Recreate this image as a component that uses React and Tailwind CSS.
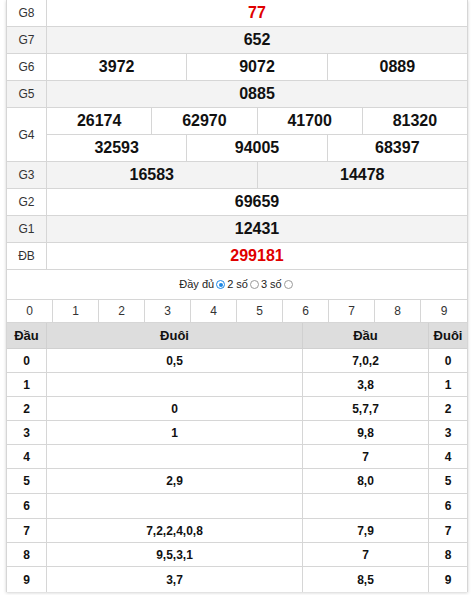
import React from "react";

const prizes = [
  { label: "G8", rows: [["77"]], red: true },
  { label: "G7", rows: [["652"]], gray: true },
  { label: "G6", rows: [["3972", "9072", "0889"]] },
  { label: "G5", rows: [["0885"]], gray: true },
  { label: "G4", rows: [["26174", "62970", "41700", "81320"], ["32593", "94005", "68397"]] },
  { label: "G3", rows: [["16583", "14478"]], gray: true },
  { label: "G2", rows: [["69659"]] },
  { label: "G1", rows: [["12431"]], gray: true },
  { label: "ĐB", rows: [["299181"]], red: true },
];

const loto = [
  { d: "0", tail: "0,5", head: "7,0,2" },
  { d: "1", tail: "", head: "3,8" },
  { d: "2", tail: "0", head: "5,7,7" },
  { d: "3", tail: "1", head: "9,8" },
  { d: "4", tail: "", head: "7" },
  { d: "5", tail: "2,9", head: "8,0" },
  { d: "6", tail: "", head: "" },
  { d: "7", tail: "7,2,2,4,0,8", head: "7,9" },
  { d: "8", tail: "9,5,3,1", head: "7" },
  { d: "9", tail: "3,7", head: "8,5" },
];

const rowH = ["h-[24px]", "h-[24px]", "h-[24px]", "h-[24px]", "h-[24px]", "h-[25px]", "h-[25px]", "h-[24px]", "h-[24px]", "h-[25px]"];

function Radio({ checked }) {
  return checked ? (
    <span className="inline-block w-[9px] h-[9px] rounded-full border border-[#1e88e5] bg-white p-[1.5px] mx-[2px]">
      <span className="block w-full h-full rounded-full bg-[#1e88e5]" />
    </span>
  ) : (
    <span className="inline-block w-[9px] h-[9px] rounded-full border border-[#9a9a9a] bg-white mx-[2px]" />
  );
}

export default function App() {
  return (
    <div className="bg-white min-h-screen font-['Liberation_Sans',Arial,sans-serif] text-[#111]">
      <div className="mx-[6px] border-x border-[#d6d6d6] shadow-[0_1px_3px_rgba(0,0,0,0.18)]">
        {/* prize table */}
        {prizes.map((p) => (
          <div key={p.label} className={`flex border-b border-[#d6d6d6] ${p.gray ? "bg-[#f3f3f3]" : "bg-white"}`}>
            <div className="w-[40px] shrink-0 border-r border-[#d6d6d6] flex items-center justify-center text-[12px] text-[#333]">
              {p.label}
            </div>
            <div className="flex-1 flex flex-col">
              {p.rows.map((r, i) => (
                <div key={i} className={`flex ${i < p.rows.length - 1 ? "border-b border-[#d6d6d6] h-[27px]" : "h-[26px]"}`}>
                  {r.map((n, j) => (
                    <div
                      key={j}
                      className={`flex-1 flex items-center justify-center text-[16px] font-bold ${j < r.length - 1 ? "border-r border-[#d6d6d6]" : ""} ${p.red ? "text-[#e00000]" : "text-[#111]"}`}
                    >
                      {n}
                    </div>
                  ))}
                </div>
              ))}
            </div>
          </div>
        ))}

        {/* options */}
        <div className="h-[30px] flex items-center justify-center text-[11px] text-[#222] border-b border-[#d6d6d6]">
          <span>Đầy đủ</span>
          <Radio checked />
          <span>2 số</span>
          <Radio />
          <span>3 số</span>
          <Radio />
        </div>

        {/* digit filter */}
        <div className="grid grid-cols-10 h-[23px] border-b border-[#d6d6d6] text-[12px] text-[#333]">
          {["0", "1", "2", "3", "4", "5", "6", "7", "8", "9"].map((d, i) => (
            <div key={d} className={`flex items-center justify-center ${i < 9 ? "border-r border-[#d6d6d6]" : ""}`}>
              {d}
            </div>
          ))}
        </div>

        {/* loto table */}
        <div className="grid grid-cols-[40px_256px_126px_1fr] h-[26px] bg-[#dddddd] border-b border-[#d0d0d0] text-[13px] font-bold text-[#111]">
          <div className="flex items-center justify-center border-r border-[#d0d0d0]">Đầu</div>
          <div className="flex items-center justify-center border-r border-[#d0d0d0]">Đuôi</div>
          <div className="flex items-center justify-center border-r border-[#d0d0d0]">Đầu</div>
          <div className="flex items-center justify-center">Đuôi</div>
        </div>
        {loto.map((r, i) => (
          <div
            key={r.d}
            className={`grid grid-cols-[40px_256px_126px_1fr] ${rowH[i]} bg-white text-[12px] font-bold text-[#111] ${i < loto.length - 1 ? "border-b border-[#d6d6d6]" : ""}`}
          >
            <div className="flex items-center justify-center border-r border-[#d6d6d6]">{r.d}</div>
            <div className="flex items-center justify-center border-r border-[#d6d6d6]">{r.tail}</div>
            <div className="flex items-center justify-center border-r border-[#d6d6d6]">{r.head}</div>
            <div className="flex items-center justify-center">{r.d}</div>
          </div>
        ))}
      </div>
    </div>
  );
}
